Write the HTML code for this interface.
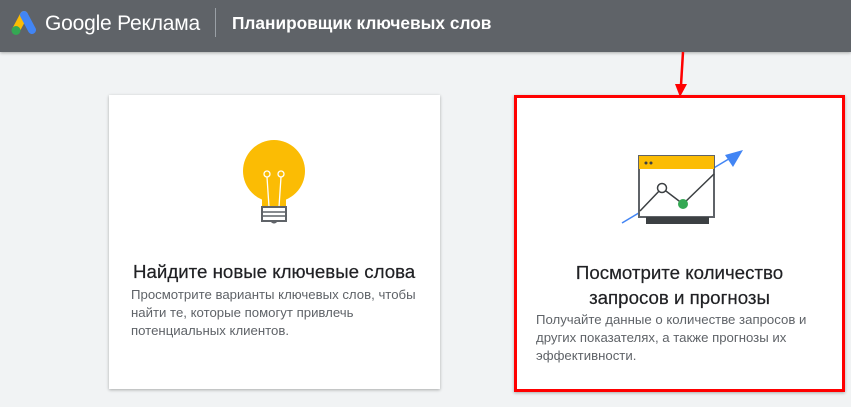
<!DOCTYPE html>
<html><head><meta charset="utf-8"><style>
body{margin:0;width:851px;height:407px;background:#f1f3f4;font-family:"Liberation Sans",Roboto,sans-serif;position:relative;overflow:hidden}
.hdr{position:absolute;left:0;top:0;width:851px;height:52px;background:#5f6368;box-shadow:0 1px 3px rgba(0,0,0,.3)}
.brand{position:absolute;left:45px;top:12px;color:#fff;font-size:21px;letter-spacing:-0.2px}
.sep{position:absolute;left:215px;top:8px;width:1px;height:29px;background:#9aa0a6}
.ttl{position:absolute;left:232px;top:13px;color:#fff;font-size:17.3px;font-weight:bold}
.card{position:absolute;background:#fff;box-shadow:0 1px 3px rgba(0,0,0,.3)}
.t{position:absolute;color:#202124;font-size:18.7px;white-space:nowrap;-webkit-text-stroke:0.2px #202124}
.d{position:absolute;color:#5f6368;font-size:13.2px;line-height:18px}
</style></head><body>
<div class="hdr">
<svg style="position:absolute;left:5px;top:8px" width="32" height="28" viewBox="0 0 32 28">
<line x1="11" y1="22" x2="19" y2="7" stroke="#fbbc04" stroke-width="8" stroke-linecap="round"/>
<line x1="19" y1="7" x2="27" y2="22" stroke="#4285f4" stroke-width="8" stroke-linecap="round"/>
<circle cx="11" cy="22.5" r="4.5" fill="#34a853"/>
</svg>
<div class="brand">Google Реклама</div>
<div class="sep"></div>
<div class="ttl">Планировщик ключевых слов</div>
</div>
<svg style="position:absolute;left:0;top:0" width="851" height="407">
<line x1="683" y1="52" x2="681" y2="85" stroke="#f00" stroke-width="2.5"/>
<polygon points="675,84 687,84 680,97" fill="#f00"/>
</svg>
<div class="card" style="left:109px;top:95px;width:331px;height:294px">
<svg style="position:absolute;left:125px;top:35px" width="80" height="100" viewBox="0 0 80 100">
<circle cx="40" cy="41" r="31" fill="#fbbc04"/>
<rect x="28" y="58" width="24" height="20" fill="#fbbc04"/>
<path d="M35 77 L33 47 M45 77 L47 47" stroke="#fff" stroke-width="1.3" fill="none"/>
<circle cx="33" cy="44" r="3" stroke="#fff" stroke-width="1.3" fill="none"/>
<circle cx="47" cy="44" r="3" stroke="#fff" stroke-width="1.3" fill="none"/>
<rect x="28" y="77" width="24" height="14" fill="#fff" stroke="#5f6368" stroke-width="2"/>
<line x1="28" y1="82" x2="52" y2="82" stroke="#5f6368" stroke-width="1.5"/>
<line x1="28" y1="86" x2="52" y2="86" stroke="#5f6368" stroke-width="1.5"/>
<path d="M36 91 Q40 96 44 91" fill="#5f6368"/>
</svg>
<div class="t" style="left:24px;top:166px">Найдите новые ключевые слова</div>
<div class="d" style="left:22px;top:191px">Просмотрите варианты ключевых слов, чтобы<br>найти те, которые помогут привлечь<br>потенциальных клиентов.</div>
</div>
<div class="card" style="left:514px;top:95px;width:325px;height:291px;border:3px solid #f00">
<svg style="position:absolute;left:100px;top:50px" width="140" height="90" viewBox="0 0 140 90">
<line x1="5" y1="75" x2="115" y2="9" stroke="#4285f4" stroke-width="1.5"/>
<polygon points="126,2 108,7 116,19" fill="#4285f4"/>
<rect x="22" y="8" width="75" height="61" fill="#fff" stroke="#5f6368" stroke-width="2"/>
<rect x="22" y="8" width="75" height="13" fill="#fbbc04"/>
<circle cx="29" cy="15" r="1.5" fill="#3c4043"/><circle cx="34" cy="15" r="1.5" fill="#3c4043"/>
<rect x="29" y="69" width="63" height="7" fill="#3c4043"/>
<polyline points="23,63 45,40 66,56 97,26" fill="none" stroke="#3c4043" stroke-width="1.5"/>
<circle cx="45" cy="40" r="4.5" fill="#fff" stroke="#3c4043" stroke-width="1.5"/>
<circle cx="66" cy="56" r="5" fill="#34a853"/>
</svg>
<div class="t" style="left:0;width:325px;text-align:center;top:162px;line-height:25px;white-space:normal">Посмотрите количество<br>запросов и прогнозы</div>
<div class="d" style="left:19px;top:213px">Получайте данные о количестве запросов и<br>других показателях, а также прогнозы их<br>эффективности.</div>
</div>
</body></html>
